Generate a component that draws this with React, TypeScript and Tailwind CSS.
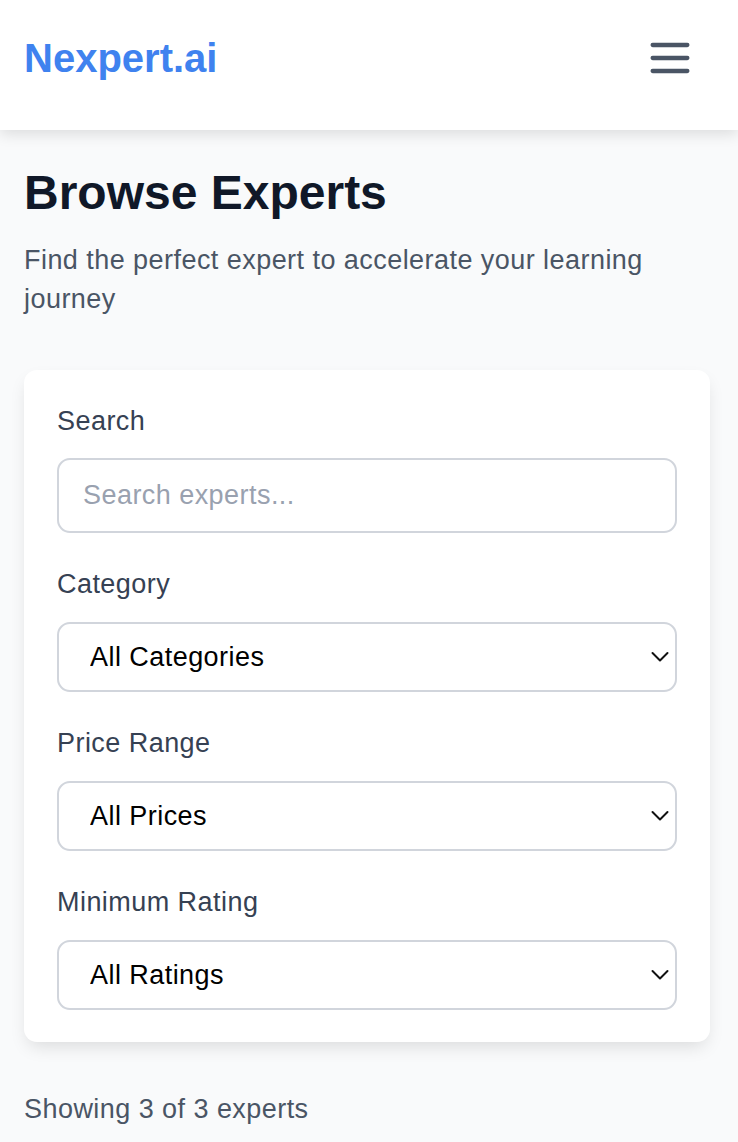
function Chevron() {
	return (
		<svg
			className="pointer-events-none absolute right-[8px] top-1/2 -translate-y-1/2"
			width="18"
			height="11"
			viewBox="0 0 18 11"
			fill="none"
			stroke="#111111"
			strokeWidth="2"
			strokeLinecap="round"
			strokeLinejoin="round"
		>
			<path d="M1.5 1.5 L9 9 L16.5 1.5" />
		</svg>
	);
}

function SelectField({ label, value }: { label: string; value: string }) {
	return (
		<div className="mt-[32px]">
			<label className="block text-[27px] tracking-[0.45px] leading-[39px] text-gray-700 mb-[18px]">
				{label}
			</label>
			<div className="relative">
				<select
					className="w-full h-[70px] appearance-none bg-white border-2 border-gray-300 rounded-[13px] pl-[31px] pr-[40px] text-[27px] tracking-[0.45px] text-black outline-none"
					defaultValue={value}
				>
					<option>{value}</option>
				</select>
				<Chevron />
			</div>
		</div>
	);
}

export default function App() {
	return (
		<div className="min-h-screen bg-gray-50 font-['Liberation_Sans',Arial,sans-serif]">
			<header className="relative z-10 h-[130px] bg-white px-[24px] pt-[32px] flex justify-between items-start shadow-[0_4px_14px_rgba(0,0,0,0.12)]">
				<div className="text-[40px] leading-[52px] font-bold text-[#3f82ef]">
					Nexpert.ai
				</div>
				<button className="mr-[18px] text-gray-600">
					<svg
						width="52"
						height="52"
						viewBox="0 0 24 24"
						fill="none"
						stroke="currentColor"
						strokeWidth="2"
						strokeLinecap="round"
					>
						<path d="M4 6h16M4 12h16M4 18h16" />
					</svg>
				</button>
			</header>

			<main className="pl-[24px] pr-[28px] pt-[34px]">
				<h1 className="text-[48px] leading-[58px] font-bold text-gray-900">
					Browse Experts
				</h1>
				<p className="mt-[19px] text-[27px] tracking-[0.45px] leading-[39px] text-gray-600">
					Find the perfect expert to accelerate your learning journey
				</p>

				<div className="mt-[51px] bg-white rounded-[13px] px-[33px] pt-[32px] pb-[32px] shadow-[0_8px_18px_-4px_rgba(0,0,0,0.13)]">
					<div>
						<label className="block text-[27px] tracking-[0.45px] leading-[39px] text-gray-700 mb-[17px]">
							Search
						</label>
						<input
							type="text"
							placeholder="Search experts..."
							className="w-full h-[75px] bg-white border-2 border-gray-300 rounded-[13px] px-[24px] text-[27px] tracking-[0.45px] text-gray-900 placeholder:text-gray-400 outline-none"
						/>
					</div>
					<SelectField label="Category" value="All Categories" />
					<SelectField label="Price Range" value="All Prices" />
					<SelectField label="Minimum Rating" value="All Ratings" />
				</div>

				<p className="mt-[48px] text-[27px] tracking-[0.45px] leading-[39px] text-gray-600">
					Showing 3 of 3 experts
				</p>
			</main>
		</div>
	);
}
